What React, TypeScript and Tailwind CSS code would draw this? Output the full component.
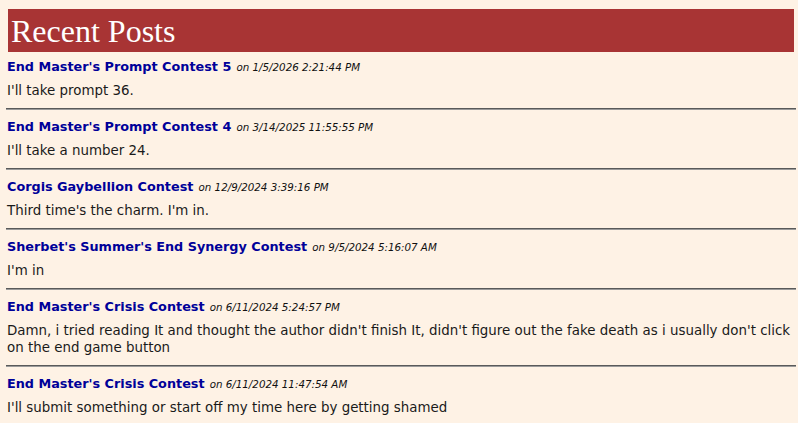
import React from "react";

const posts = [
  { title: "End Master's Prompt Contest 5", date: "1/5/2026 2:21:44 PM", body: "I'll take prompt 36." },
  { title: "End Master's Prompt Contest 4", date: "3/14/2025 11:55:55 PM", body: "I'll take a number 24." },
  { title: "Corgis Gaybellion Contest", date: "12/9/2024 3:39:16 PM", body: "Third time's the charm. I'm in." },
  { title: "Sherbet's Summer's End Synergy Contest", date: "9/5/2024 5:16:07 AM", body: "I'm in" },
  {
    title: "End Master's Crisis Contest",
    date: "6/11/2024 5:24:57 PM",
    body: "Damn, i tried reading It and thought the author didn't finish It, didn't figure out the fake death as i usually don't click on the end game button",
  },
  { title: "End Master's Crisis Contest", date: "6/11/2024 11:47:54 AM", body: "I'll submit something or start off my time here by getting shamed" },
];

export default function App() {
  return (
    <div className="min-h-screen w-[798px] h-[423px] overflow-hidden bg-[#fef2e5] pl-[6px] pr-[2px] pt-[9px] font-['DejaVu_Sans',Verdana,sans-serif] text-[#1a1a1a]">
      <div className="mx-[2px] h-[43px] bg-[#a83434] flex items-center pl-[3px]">
        <h1 className="font-['Liberation_Serif','Times_New_Roman',serif] text-[32px] leading-none text-white pt-[1px]">
          Recent Posts
        </h1>
      </div>

      <div className="pt-[5px]">
        {posts.map((p, i) => (
          <div key={i}>
            <div className="px-[1px] h-[18px] leading-[18px] whitespace-nowrap">
              <span className="text-[12.8px] font-bold text-[#000099]">{p.title}</span>{" "}
              <span className="text-[10.3px] italic text-[#111]">on {p.date}</span>
            </div>
            <p className="mt-[7px] px-[1px] text-[13.4px] leading-[17px]">{p.body}</p>
            <div className="mt-[9px] mb-[7px] border-t border-t-[#5a5a5a] border-b border-b-[#9a9a9a]" />
          </div>
        ))}
      </div>
    </div>
  );
}
